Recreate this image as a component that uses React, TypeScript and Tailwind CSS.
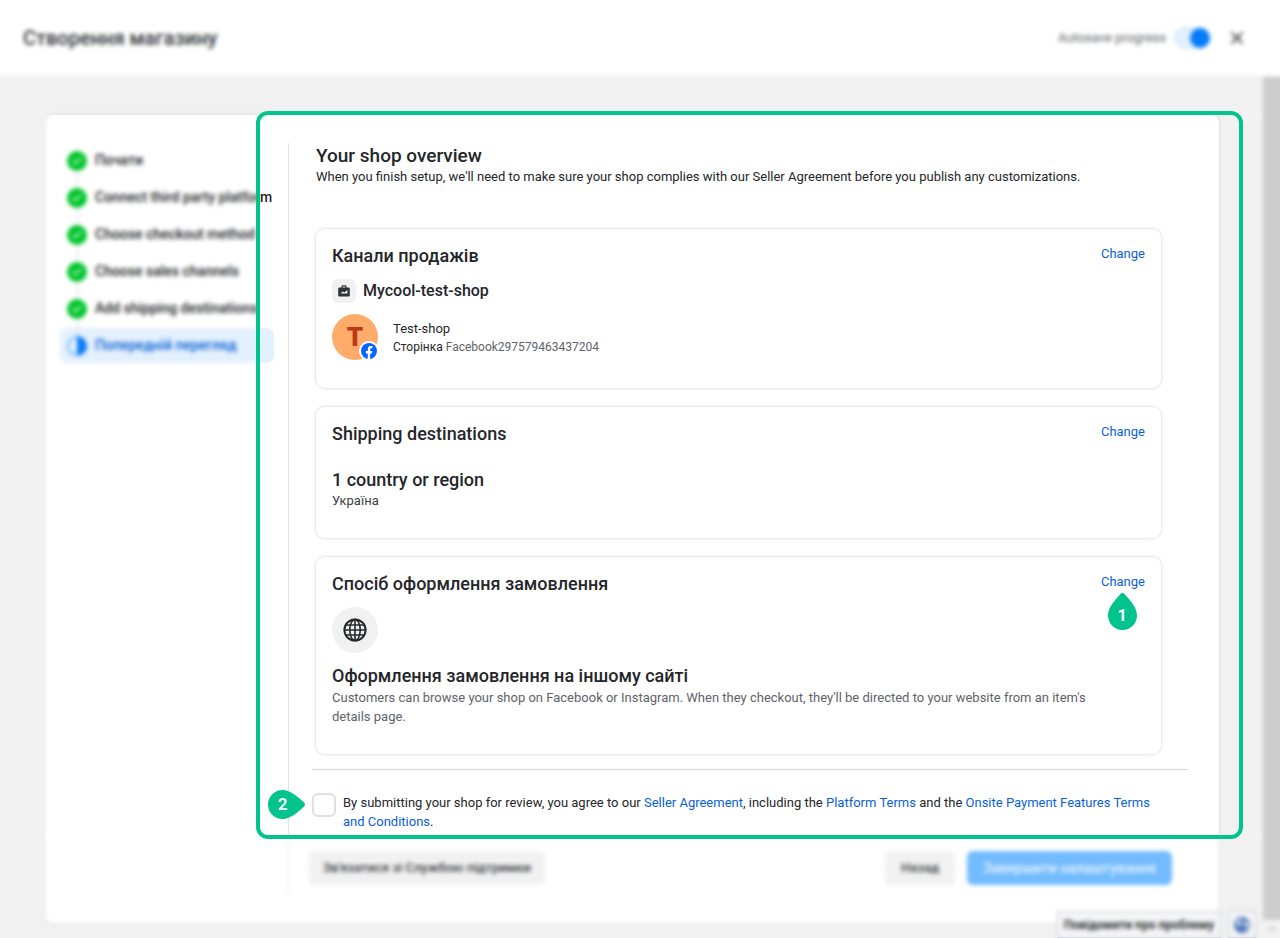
import React from 'react';
import { X, Check, ChevronDown } from 'lucide-react';

interface Step {
    label: string;
    active?: boolean;
}

const steps: Step[] = [
    { label: 'Почати' },
    { label: 'Connect third party platform' },
    { label: 'Choose checkout method' },
    { label: 'Choose sales channels' },
    { label: 'Add shipping destinations' },
    { label: 'Попередній перегляд', active: true }
];

const StepIcon: React.FC<{ active?: boolean }> = ({ active }) =>
    active ? (
        <svg className="h-5 w-5 shrink-0" viewBox="0 0 20 20" aria-hidden="true">
            <circle cx="10" cy="10" r="9" fill="#e3f0fd" stroke="#5ba8f7" strokeWidth="1.5" />
            <path d="M10 0a10 10 0 0 1 0 20z" fill="#0a7cf5" />
        </svg>
    ) : (
        <span className="flex h-5 w-5 shrink-0 items-center justify-center rounded-full bg-[#00c42b] text-[#e3fbe6]">
            <Check className="h-3 w-3" strokeWidth={3} />
        </span>
    );

const BriefcaseIcon = () => (
    <svg className="h-3 w-3" viewBox="0 0 12 12" aria-hidden="true">
        <path d="M4 3V1.6c0-.4.3-.7.7-.7h2.6c.4 0 .7.3.7.7V3" fill="none" stroke="#303338" strokeWidth="1.2" />
        <rect x="0.2" y="2.6" width="11.6" height="8.8" rx="1.2" fill="#303338" />
        <path d="M2.6 8.600 4.800 6.600l1.600 1L9.400 5v3.600z" fill="#f1f1f1" />
    </svg>
);

const GlobeIcon = () => (
    <svg className="h-6 w-6" viewBox="0 0 24 24" fill="none" stroke="#26282b" strokeWidth="2" aria-hidden="true">
        <circle cx="12" cy="12" r="10.6" />
        <ellipse cx="12" cy="12" rx="5.2" ry="10.6" strokeWidth="1.6" />
        <path d="M12 1.4v21.2M1.4 12h21.2M3 7h18M3 17h18" strokeWidth="1.6" />
    </svg>
);

const FacebookBadge = () => (
    <svg className="absolute -right-px -bottom-px h-5 w-5" viewBox="0 0 20 20" aria-hidden="true">
        <circle cx="10" cy="10" r="10" fill="#fff" />
        <circle cx="10" cy="10" r="8" fill="#0866ff" />
        <path d="M8.8 18v-5.6H6.9V9.9h1.9V8.4c0-2.4 1.1-3.5 3.3-3.5.4 0 1 .1 1.3.2v2.2h-.9c-1 0-1.4.4-1.4 1.4v1.2h2.2l-.4 2.5h-1.8V18z" fill="#fff" />
    </svg>
);

interface MarkerProps {
    value: number;
    className: string;
    pointing: 'up' | 'right';
}

const Marker: React.FC<MarkerProps> = ({ value, className, pointing }) => (
    <span
        className={`absolute z-30 flex text-[17px] leading-[29px] font-bold text-white ${className} ${
            pointing === 'up' ? 'h-[37px] w-[29px] items-end justify-center' : 'h-[29px] w-[37px] justify-start pl-[10px]'
        }`}
    >
        <svg
            className={pointing === 'up' ? 'absolute inset-0 h-[37px] w-[29px]' : 'absolute inset-0 h-[29px] w-[37px]'}
            viewBox={pointing === 'up' ? '0 0 29 37' : '0 0 37 29'}
            fill="#00c48c"
            aria-hidden="true"
        >
            {pointing === 'up' ? (
                <path d="M14.5 0c1 0 1.700.6 2.500 1.500C22 7 29 14.500 29 22.500a14.500 14.500 0 0 1-29 0C0 14.500 7 7 12 1.500 12.800.6 13.500 0 14.500 0z" />
            ) : (
                <path d="M37 14.500c0 1-.6 1.700-1.500 2.500C30 22 22.500 29 14.500 29a14.500 14.500 0 0 1 0-29C22.500 0 30 7 35.500 12c.9.8 1.500 1.500 1.500 2.500z" />
            )}
        </svg>
        <span className="relative">{value}</span>
    </span>
);

interface OverviewCardProps {
    title: string;
    marker?: number;
    children: React.ReactNode;
}

const OverviewCard: React.FC<OverviewCardProps> = ({ title, marker, children }) => (
    <section className="rounded-[10px] border border-[#ececec] bg-white px-4 pt-[15px] pb-7 shadow-[0_0_3px_rgba(0,0,0,0.1)]">
        <div className="flex items-start justify-between">
            <h2 className="text-[18px] leading-6 font-medium">{title}</h2>
            <div className="relative">
                <a href="#" className="block text-[13px] leading-5 text-[#0a5fd8]">
                    Change
                </a>
                {marker && <Marker value={marker} pointing="up" className="top-[21px] left-[7px]" />}
            </div>
        </div>
        {children}
    </section>
);

// Highlight frame; everything around it is shown out of focus
const FocusFrame = () => (
    <div className="pointer-events-none absolute -top-1 -right-6 bottom-[84px] left-[211px] z-20 border-4 border-transparent">
        <div className="absolute bottom-full left-1/2 h-screen w-[200vw] -translate-x-1/2 backdrop-blur-[2px]" />
        <div className="absolute top-full left-1/2 h-screen w-[200vw] -translate-x-1/2 backdrop-blur-[2px]" />
        <div className="absolute inset-y-0 right-full w-screen backdrop-blur-[2px]" />
        <div className="absolute inset-y-0 left-full w-screen backdrop-blur-[2px]" />
        <div className="absolute -inset-1 rounded-xl border-4 border-[#00c48c]" />
    </div>
);

const App: React.FC = () => {
    return (
        <div className="relative flex min-h-screen flex-col overflow-hidden bg-[#f1f1f1] font-[Roboto,'Liberation_Sans',sans-serif] text-[#242629]">
            <header className="flex h-[77px] items-center justify-between border-b border-[#e6e6e6] bg-white pr-[33px] pl-[23px]">
                <h1 className="text-[20px] leading-6 font-medium text-[#303338]">Створення магазину</h1>
                <div className="flex items-center">
                    <label htmlFor="autosave" className="text-[13px] text-[#606367]">
                        Autosave progress
                    </label>
                    <span className="relative ml-2 flex">
                        <input
                            id="autosave"
                            type="checkbox"
                            role="switch"
                            defaultChecked
                            className="h-[22px] w-9 appearance-none rounded-full border border-[#cfe3f8] bg-[#e1effe]"
                        />
                        <span className="pointer-events-none absolute top-px right-0 h-5 w-5 rounded-full bg-[#057bf8]" />
                    </span>
                    <button type="button" aria-label="Close" className="ml-[17px] text-[#4b4d50]">
                        <X className="h-5 w-5" strokeWidth={2.4} />
                    </button>
                </div>
            </header>

            <div className="flex flex-1">
                <main className="min-w-0 flex-1 pt-[38px] pr-11 pb-[14px] pl-[45px]">
                    <div className="relative flex rounded-lg bg-white pt-7 pb-[30px] shadow-[0_0_3px_rgba(0,0,0,0.15)]">
                        <nav className="w-[243px] shrink-0 pr-[14px] pl-[15px]">
                            <ol className="flex flex-col gap-0.5">
                                {steps.map((step, index) => (
                                    <li key={step.label} className="relative">
                                        {index > 0 && <span className="absolute -top-2.5 left-[17px] h-4 w-px bg-[#d5d5d5]" />}
                                        <a
                                            href="#"
                                            className={`flex h-[35px] items-center gap-2 rounded-lg pl-[7px] text-[14px] font-medium whitespace-nowrap ${
                                                step.active ? 'bg-[#e3f0fd] text-[#0a66d8]' : 'text-[#242629]'
                                            }`}
                                        >
                                            <StepIcon active={step.active} />
                                            {step.label}
                                        </a>
                                    </li>
                                ))}
                            </ol>
                        </nav>

                        <div className="min-w-0 flex-1 border-l border-[#e4e4e4] pr-[31px] pb-2 pl-[23px]">
                            <div className="pr-[26px] pl-[3px]">
                                <div className="pl-px">
                                    <h2 className="pt-0.5 text-[19px] leading-[22px] font-medium">Your shop overview</h2>
                                    <p className="text-[13px] leading-[19px]">
                                        When you finish setup, we'll need to make sure your shop complies with our Seller Agreement before you publish
                                        any customizations.
                                    </p>
                                </div>

                                <div className="mt-[42px] flex flex-col gap-[17px]">
                                    <OverviewCard title="Канали продажів">
                                        <div className="mt-[11px] flex items-center gap-[7px]">
                                            <span className="flex h-6 w-6 items-center justify-center rounded-md bg-[#f1f1f1]">
                                                <BriefcaseIcon />
                                            </span>
                                            <h3 className="text-[16px] leading-6 font-medium">Mycool-test-shop</h3>
                                        </div>
                                        <div className="mt-[11px] flex items-center gap-[15px]">
                                            <div className="relative flex h-[46px] w-[46px] items-center justify-center rounded-full bg-[#ffab6b] text-[26px] font-black text-[#b93a14]">
                                                T
                                                <FacebookBadge />
                                            </div>
                                            <div className="pt-0.5">
                                                <p className="text-[13px] leading-[18px]">Test-shop</p>
                                                <p className="text-[12px] leading-[18px]">
                                                    Сторінка <span className="text-[#606367]">Facebook297579463437204</span>
                                                </p>
                                            </div>
                                        </div>
                                    </OverviewCard>

                                    <OverviewCard title="Shipping destinations">
                                        <h3 className="mt-[22px] text-[18px] leading-6 font-medium">1 country or region</h3>
                                        <p className="text-[13px] leading-[18px] text-[#3c3e42]">Україна</p>
                                    </OverviewCard>

                                    <OverviewCard title="Спосіб оформлення замовлення" marker={1}>
                                        <div className="mt-[11px] flex h-[46px] w-[46px] items-center justify-center rounded-full bg-[#f1f1f1]">
                                            <GlobeIcon />
                                        </div>
                                        <h3 className="mt-[11px] text-[18px] leading-6 font-medium">Оформлення замовлення на іншому сайті</h3>
                                        <p className="pr-8 text-[13px] leading-[19px] text-[#606367]">
                                            Customers can browse your shop on Facebook or Instagram. When they checkout, they'll be directed to your
                                            website from an item's details page.
                                        </p>
                                    </OverviewCard>
                                </div>
                            </div>

                            <hr className="mt-[14px] border-t border-[#d4d4d4]" />

                            <div className="relative mt-[23px] flex items-start gap-[7px] pr-7">
                                <Marker value={2} pointing="right" className="-top-[3px] -left-[44px]" />
                                <input
                                    id="agree"
                                    type="checkbox"
                                    className="h-6 w-6 shrink-0 appearance-none rounded-md border-2 border-[#e0e0e0] bg-white"
                                />
                                <label htmlFor="agree" className="text-[13px] leading-[19px]">
                                    By submitting your shop for review, you agree to our{' '}
                                    <a href="#" className="text-[#0a5fd8]">Seller Agreement</a>, including the{' '}
                                    <a href="#" className="text-[#0a5fd8]">Platform Terms</a> and the{' '}
                                    <a href="#" className="text-[#0a5fd8]">Onsite Payment Features Terms and Conditions</a>.
                                </label>
                            </div>

                            <div className="mt-5 -ml-[3px] flex items-center gap-3 pr-4 font-medium">
                                <button type="button" className="mr-auto h-[34px] rounded-md bg-[#f1f1f1] px-[14px] text-[13px] text-[#3c3e42]">
                                    Зв'язатися зі Службою підтримки
                                </button>
                                <button type="button" className="h-[34px] rounded-md bg-[#f1f1f1] px-4 text-[13px] text-[#3c3e42]">
                                    Назад
                                </button>
                                <button type="button" className="h-[34px] rounded-md bg-[#72bbfd] px-4 text-[14px] text-[#e3f1ff]">
                                    Завершити налаштування
                                </button>
                            </div>
                        </div>

                        <FocusFrame />
                    </div>
                </main>

                <div className="flex w-[17px] flex-col items-center bg-[#f1f1f1]">
                    <div className="w-full flex-1 bg-[#cdcdcd]" />
                    <ChevronDown className="h-[18px] w-3 text-[#8a8a8a]" />
                </div>
            </div>

            <div className="absolute right-6 bottom-0 flex gap-[7px]">
                <button type="button" className="h-[27px] border border-[#c3cad6] bg-[#f5f6f7] px-1.5 text-[12px] font-bold whitespace-nowrap text-[#303338]">
                    Повідомити про проблему
                </button>
                <button type="button" aria-label="Language" className="flex h-[27px] w-7 items-center justify-center border border-[#c3cad6] bg-[#f5f6f7]">
                    <svg className="h-4 w-4" viewBox="0 0 16 16" aria-hidden="true">
                        <circle cx="8" cy="8" r="8" fill="#4a74b8" />
                        <path d="M3 3l4-1 1 3-2 2 1 2-2 1-3-3zM10 4l4 1 1 4-3 4-1-4-2-2z" fill="#c3d3ea" />
                    </svg>
                </button>
            </div>
        </div>
    );
};

export default App;
